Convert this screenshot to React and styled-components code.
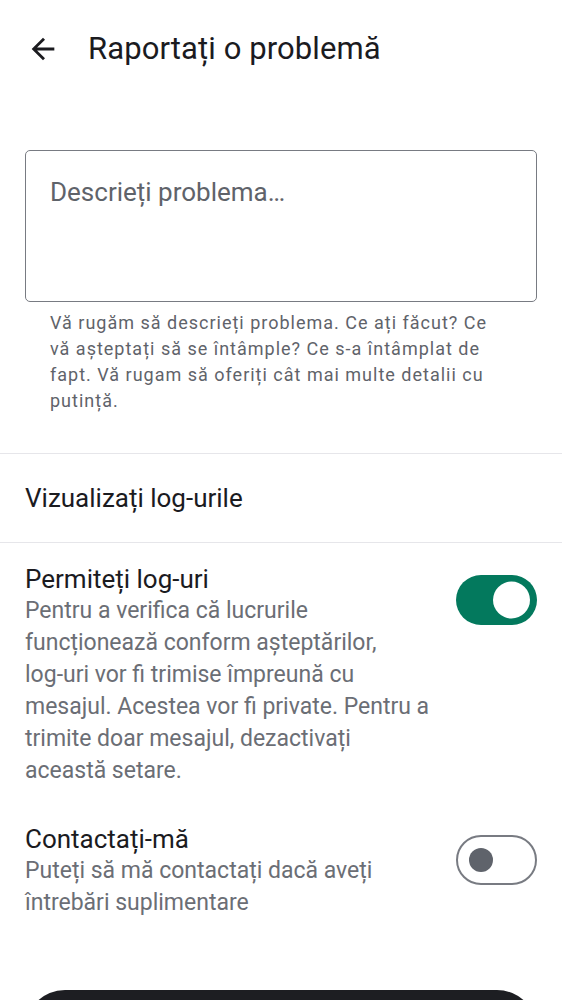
import React, { useState } from 'react'
import styled, { createGlobalStyle } from 'styled-components'

const GlobalStyle = createGlobalStyle`
    html, body {
        margin: 0;
        padding: 0;
        background: #ffffff;
        font-family: Roboto, "Noto Sans", "Liberation Sans", sans-serif;
        -webkit-font-smoothing: antialiased;
    }
    * {
        box-sizing: border-box;
    }
`

const Page = styled.div`
    width: 562px;
    height: 1000px;
    overflow: hidden;
    background: #ffffff;
    color: #1b1b1f;
`

const Header = styled.header`
    height: 98px;
    display: flex;
    align-items: center;
    padding-left: 26px;
    gap: 28px;
`

const BackButton = styled.button`
    width: 34px;
    height: 34px;
    padding: 0;
    border: 0;
    background: transparent;
    color: #1b1b1f;
    display: flex;
    align-items: center;
    justify-content: center;
    cursor: pointer;
`

const Title = styled.h1`
    margin: 0;
    font-size: 31px;
    font-weight: 400;
    line-height: 40px;
    letter-spacing: 0.1px;
    color: #1b1b1f;
`

const FormSection = styled.section`
    padding: 52px 25px 0;
`

const TextArea = styled.textarea`
    display: block;
    width: 100%;
    height: 152px;
    resize: none;
    border: 1.5px solid #787b82;
    border-radius: 5px;
    padding: 24px 24px;
    font-family: inherit;
    font-size: 26px;
    line-height: 34px;
    color: #1b1b1f;
    outline: none;

    &::placeholder {
        color: #5f636a;
    }
`

const Helper = styled.p`
    margin: 8px 0 0;
    padding: 0 64px 0 50px;
    font-size: 18px;
    line-height: 26px;
    letter-spacing: 1px;
    color: #5f636a;
`

const Divider = styled.hr`
    margin: ${(p) => p.$top || 0}px 0 0;
    border: 0;
    border-top: 1px solid #e6e6ea;
`

const LinkRow = styled.div`
    height: 88px;
    display: flex;
    align-items: center;
    padding: 0 25px;
    font-size: 26px;
    color: #1b1b1f;
    cursor: pointer;
`

const SettingRow = styled.div`
    display: flex;
    align-items: flex-start;
    justify-content: space-between;
    gap: 24px;
    padding: ${(p) => p.$top}px 25px 0;
`

const SettingText = styled.div`
    flex: 1;
`

const SettingTitle = styled.div`
    font-size: 26px;
    line-height: 32px;
    color: #1b1b1f;
`

const SettingDesc = styled.div`
    font-size: 23px;
    line-height: 32px;
    color: #6b6e75;
`

const NoWrap = styled.span`
    white-space: nowrap;
`

const Switch = styled.button`
    flex: none;
    margin-top: 12px;
    width: 81px;
    height: 50px;
    border-radius: 25px;
    padding: 0;
    position: relative;
    cursor: pointer;
    background: ${(p) => (p.$on ? '#03795d' : '#ffffff')};
    border: ${(p) => (p.$on ? '0' : '2.5px solid #787b82')};
`

const Thumb = styled.span`
    position: absolute;
    top: 50%;
    transform: translateY(-50%);
    border-radius: 50%;
    width: ${(p) => (p.$on ? 37 : 24)}px;
    height: ${(p) => (p.$on ? 37 : 24)}px;
    left: ${(p) => (p.$on ? 37 : 11)}px;
    background: ${(p) => (p.$on ? '#ffffff' : '#5f636b')};
`

const SubmitButton = styled.button`
    display: block;
    margin: 71px 25px 0;
    width: calc(100% - 50px);
    height: 80px;
    border: 0;
    border-radius: 40px;
    background: #1d1e22;
    cursor: pointer;
`

function Toggle({ on, onChange }) {
    return (
        <Switch $on={on} onClick={() => onChange(!on)} aria-pressed={on}>
            <Thumb $on={on} />
        </Switch>
    )
}

export default function App() {
    const [text, setText] = useState('')
    const [logs, setLogs] = useState(true)
    const [contact, setContact] = useState(false)

    return (
        <Page>
            <GlobalStyle />
            <Header>
                <BackButton aria-label="Înapoi">
                    <svg width="34" height="34" viewBox="0 0 24 24" fill="currentColor">
                        <path d="M20 11H7.83l5.59-5.59L12 4l-8 8 8 8 1.41-1.41L7.83 13H20v-2z" />
                    </svg>
                </BackButton>
                <Title>Raportați o problemă</Title>
            </Header>

            <FormSection>
                <TextArea
                    value={text}
                    onChange={(e) => setText(e.target.value)}
                    placeholder="Descrieți problema…"
                />
            </FormSection>
            <Helper>
                Vă rugăm să descrieți problema. Ce ați făcut? Ce vă așteptați să se întâmple? Ce s-a
                întâmplat de fapt. Vă rugam să oferiți cât mai multe detalii cu putință.
            </Helper>

            <Divider $top={39} />
            <LinkRow>Vizualizați log-urile</LinkRow>
            <Divider />

            <SettingRow $top={20}>
                <SettingText>
                    <SettingTitle>Permiteți log-uri</SettingTitle>
                    <SettingDesc>
                        Pentru a verifica că lucrurile funcționează conform așteptărilor,{' '}
                        <NoWrap>log-uri</NoWrap> vor fi trimise împreună cu mesajul. Acestea vor fi
                        private. Pentru a trimite doar mesajul, dezactivați această setare.
                    </SettingDesc>
                </SettingText>
                <Toggle on={logs} onChange={setLogs} />
            </SettingRow>

            <SettingRow $top={36}>
                <SettingText>
                    <SettingTitle>Contactați-mă</SettingTitle>
                    <SettingDesc>Puteți să mă contactați dacă aveți întrebări suplimentare</SettingDesc>
                </SettingText>
                <Toggle on={contact} onChange={setContact} />
            </SettingRow>

            <SubmitButton aria-label="Trimiteți" />
        </Page>
    )
}
